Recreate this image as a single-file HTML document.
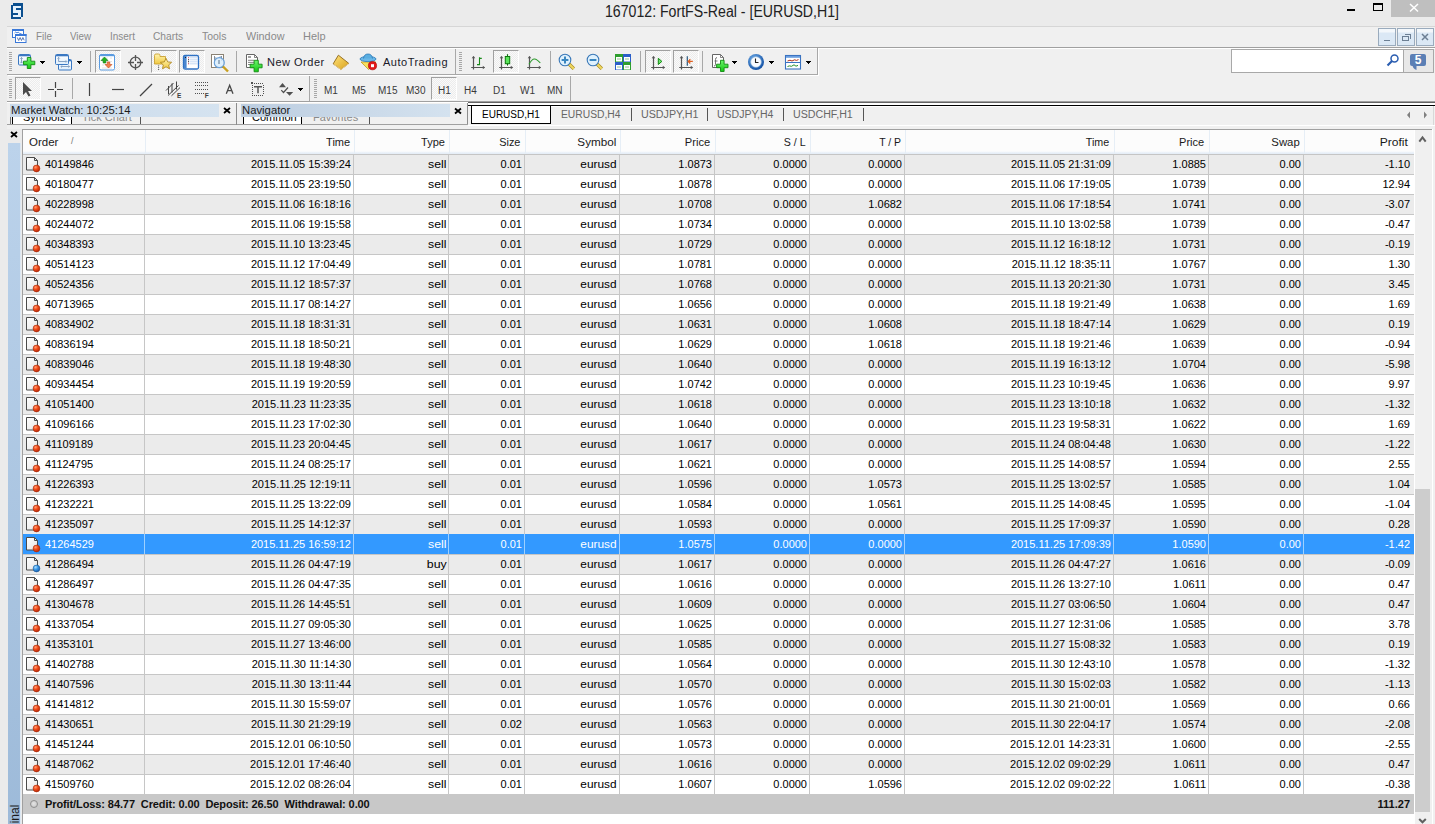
<!DOCTYPE html>
<html><head><meta charset="utf-8"><style>
*{margin:0;padding:0;box-sizing:border-box}
html,body{width:1435px;height:824px;overflow:hidden;background:#ebebeb;font-family:"Liberation Sans",sans-serif;position:relative}
.a{position:absolute}
#title{position:absolute;left:0;top:0;width:1435px;height:26px;background:#ebebeb}
#title .t{position:absolute;left:605px;top:3px;font-size:16px;color:#222;white-space:nowrap;transform:scaleX(0.883);transform-origin:0 0}
#closebtn{position:absolute;left:1391px;top:0;width:44px;height:17px;background:#bfbfbf}
#menubar{position:absolute;left:7px;top:26px;width:1428px;height:22px;background:#f0f0f0;border-top:1px solid #d6d6d6;border-bottom:1px solid #a0a0a0}
#rebar:before{content:"";position:absolute;left:0;top:0;width:1428px;height:1px;background:#fff}
.menu{position:absolute;top:29.8px;font-size:11.5px;color:#8a8a8a;transform-origin:0 0}
.mdib{position:absolute;top:28px;width:18px;height:18px;border:1px solid #9aabbd;background:linear-gradient(#f3f7fb 0,#f3f7fb 3px,#dbe8f5 4px,#dbe8f5 100%)}
#rebar{position:absolute;left:7px;top:48px;width:1428px;height:54px;background:#f0f0f0;border-bottom:1px solid #a0a0a0}
.tb{position:absolute;background:#f0f0f0}
.grip{position:absolute;width:3px;background:repeating-linear-gradient(#a8a8a8 0,#a8a8a8 1px,transparent 1px,transparent 2px)}
.sep{position:absolute;width:1px;background:#a8a8a8}
.pressed{position:absolute;border-left:1px solid #a0a0a0;border-top:1px solid #a0a0a0;border-right:1px solid #fff;border-bottom:1px solid #fff;background-color:#f7f7f7;background-image:repeating-conic-gradient(#ececec 0 25%,#fafafa 0 50%);background-size:2px 2px}
.tft{position:absolute;font-size:10px;color:#3a3a3a;top:84.5px}
.ttxt{position:absolute;font-size:11px;letter-spacing:0.5px;color:#1a1a2a;top:56px}
#panels{position:absolute;left:7px;top:102px;width:1428px;height:27px;background:#f0f0f0}
.ph{position:absolute;top:104px;height:13px;background:#cbdbeb;font-size:11.3px;line-height:13px;color:#1a1a1a;white-space:nowrap}
.xx{position:absolute;font-size:10px;font-weight:bold;color:#000}
#tbl{position:absolute;left:22px;top:129px;width:1392px;height:695px;background:#fff;border-left:1px solid #a0a0a0;border-top:1px solid #a0a0a0;overflow:hidden}
.hdr{position:absolute;left:0;top:0;width:1391px;height:25px;background:linear-gradient(#fcfcfc 0,#fcfcfc 21px,#f3f7fc 22px,#e6eef7 23px,#e6eef7 24px)}
.hdr:after{content:"";position:absolute;left:0;top:24px;width:1391px;height:1px;background:#c5c5c5}
.hc,.hr{position:absolute;top:5.6px;font-size:11.5px;transform-origin:100% 50%;color:#1a1a1a;white-space:nowrap}
.sortmark{position:absolute;top:6px;font-size:9px;color:#777}
.hsep{position:absolute;top:0;width:1px;height:24px;background:#e6eef6}
.row{position:absolute;left:0;width:1391px;height:20px;background:#fff;border-bottom:1px solid #c6c6c6}
.row.alt{background:#ebebeb}
.row.sel{background:#3399ff;color:#fff}
.row.sel span{margin-top:1px}
.row.sel .ico{top:1px}
.row span{position:absolute;top:3px;font-size:11px;color:#000;white-space:nowrap}
.row.sel span{color:#fff}
.c0{left:22px}
.vsep{position:absolute;top:25px;width:1px;height:640px;background:#c6c6c6}
.ico{position:absolute;left:0;top:0}
.sum{position:absolute;left:0;top:664px;width:1392px;height:20px;background:#c8c8c8}
.sumico{position:absolute;left:7px;top:6px;width:8px;height:8px;border-radius:50%;border:1px solid #8f8f8f;background:radial-gradient(circle at 45% 45%,#e4e4e4 0,#cfcfcf 60%,#b8b8b8 100%)}
.sumtxt{position:absolute;left:22px;top:4px;font-size:11px;font-weight:bold;color:#111;white-space:nowrap;letter-spacing:-0.1px}
.sumtot{position:absolute;right:5px;top:4px;font-size:11px;font-weight:bold;color:#111}
#scroll{position:absolute;left:1414px;top:129px;width:21px;height:695px;background:#f0f0f0;border-left:1px solid #fff;border-right:3px solid #f0f0f0}
#scroll:after{content:"";position:absolute;left:17px;top:0;width:1px;height:695px;background:#fff}
#thumb{position:absolute;left:1415px;top:489px;width:15px;height:323px;background:#cdcdcd}
#lstrip{position:absolute;left:8px;top:143px;width:13px;height:681px;background:linear-gradient(#bcd3eb,#9dbad9);border-right:1px solid #dce7f2}
#tb1{position:absolute;left:7px;top:48px;width:811px;height:27px;border-right:1px solid #a8a8a8;border-bottom:1px solid #a8a8a8;box-shadow:1px 1px 0 #fff}
#tb2{position:absolute}
#search{position:absolute;left:1231px;top:49px;width:173px;height:24px;background:#fff;border:1px solid #a8a8a8}
#comm{position:absolute;left:1403px;top:49px;width:31px;height:24px;background:#e8e8e8;border:1px solid #a8a8a8}
#ic{position:absolute;left:0;top:0}
#splitter{position:absolute;left:236px;top:102px;width:1px;height:23px;background:#8c8c8c}
#navright{position:absolute;left:467px;top:102px;width:1px;height:23px;background:#8c8c8c}
#mwtabs{position:absolute;left:9px;top:117px;width:226px;height:8px;background:#f0f0f0;border-bottom:1px solid #8c8c8c}
#navtabs{position:absolute;left:240px;top:117px;width:227px;height:8px;background:#f0f0f0;border-bottom:1px solid #8c8c8c}
#tabline{position:absolute;left:468px;top:105px;width:967px;height:1px;background:#000}
#tabbot{position:absolute;left:468px;top:125px;width:967px;height:1px;background:#fff}
.tsep{position:absolute;top:108px;width:1px;height:13px;background:#555}
.ctab{position:absolute;top:108.5px;font-size:10px;color:#666;white-space:nowrap}
.ctab.act{left:471px;top:105px;width:80px;height:19px;background:#fff;border:1px solid #000;border-top:none;color:#000;padding:3.5px 0 0 10px}
#termlbl{position:absolute;left:9px;top:760px;width:60px;transform-origin:0 0;transform:rotate(-90deg) translate(-62px,0);font-size:11px;color:#111}
#scrtop{position:absolute;left:1414px;top:129px;width:18px;height:1px;background:#a0a0a0}
.ssep{position:absolute;top:0;width:1px;height:20px;background:#9dd0ff}

</style></head><body>
<div id="title"><span class="t">167012: FortFS-Real - [EURUSD,H1]</span></div>
<div id="closebtn"></div>
<div id="menubar"></div>
<span class="menu" style="left:35.5px;transform:scaleX(0.861)">File</span>
<span class="menu" style="left:69.5px;transform:scaleX(0.854)">View</span>
<span class="menu" style="left:110px;transform:scaleX(0.868)">Insert</span>
<span class="menu" style="left:153.3px;transform:scaleX(0.888)">Charts</span>
<span class="menu" style="left:202px;transform:scaleX(0.909)">Tools</span>
<span class="menu" style="left:246px;transform:scaleX(0.94)">Window</span>
<span class="menu" style="left:303px;transform:scaleX(0.957)">Help</span>
<div class="mdib" style="left:1378px"></div>
<div class="mdib" style="left:1397px"></div>
<div class="mdib" style="left:1416px"></div>
<div id="rebar"></div>
<div id="tb1"></div>
<div id="search"></div>
<div id="comm"></div>
<div class="pressed" style="left:95px;top:50px;width:26px;height:23px"></div>
<div class="pressed" style="left:151px;top:50px;width:26px;height:23px"></div>
<div class="pressed" style="left:179px;top:50px;width:26px;height:23px"></div>
<div class="pressed" style="left:493px;top:50px;width:26px;height:23px"></div>
<div class="pressed" style="left:645px;top:50px;width:26px;height:23px"></div>
<div class="pressed" style="left:673px;top:50px;width:26px;height:23px"></div>
<div class="pressed" style="left:15px;top:77px;width:26px;height:23px"></div>
<div class="pressed" style="left:431px;top:77px;width:26px;height:23px"></div>
<span class="ttxt" style="left:267px">New Order</span>
<span class="ttxt" style="left:383px">AutoTrading</span>
<span class="tft" style="left:324px">M1</span>
<span class="tft" style="left:352px">M5</span>
<span class="tft" style="left:378px">M15</span>
<span class="tft" style="left:406px">M30</span>
<span class="tft" style="left:438px">H1</span>
<span class="tft" style="left:464px">H4</span>
<span class="tft" style="left:493px">D1</span>
<span class="tft" style="left:520px">W1</span>
<span class="tft" style="left:547px">MN</span>
<div id="panels"></div>
<div class="ph" style="left:10px;width:209px;padding-left:1px;background:linear-gradient(90deg,#c8d8e9,#d5e3f0)">Market Watch: 10:25:14</div>
<div class="ph" style="left:241px;width:209px;padding-left:1px;background:linear-gradient(90deg,#bccde0,#d4e2ef)">Navigator</div>
<div id="mwtabs"></div>
<div id="navtabs"></div>
<span class="ctab act">EURUSD,H1</span>
<span class="ctab" style="left:561px;transform:scaleX(1.03);transform-origin:0 0">EURUSD,H4</span>
<span class="ctab" style="left:641px;transform:scaleX(1.07);transform-origin:0 0">USDJPY,H1</span>
<span class="ctab" style="left:717px;transform:scaleX(1.05);transform-origin:0 0">USDJPY,H4</span>
<span class="ctab" style="left:793px;transform:scaleX(1.065);transform-origin:0 0">USDCHF,H1</span>
<i class="tsep" style="left:631px"></i><i class="tsep" style="left:707px"></i><i class="tsep" style="left:783px"></i><i class="tsep" style="left:863px"></i>
<div id="lstrip"></div>
<div id="scroll"></div>
<div id="thumb"></div>
<svg id="ic" width="1435" height="130" viewBox="0 0 1435 130" shape-rendering="crispEdges">
<!-- logo -->
<rect x="12" y="4.5" width="10" height="13" fill="#e6f2fc"/>
<g fill="#0b4f8f">
<rect x="13" y="3" width="10" height="2.5" fill="#0b4f8f"/>
<rect x="21" y="3" width="2.2" height="13.6"/>
<rect x="10.8" y="5.4" width="2.2" height="13.3"/>
<rect x="10.8" y="16.6" width="9.8" height="2.1"/>
<rect x="16" y="8.2" width="5.2" height="1.8"/>
<rect x="13" y="12.5" width="4.8" height="2"/>
</g>
<!-- window buttons -->
<rect x="1347" y="9" width="8" height="2" fill="#000"/>
<rect x="1373.5" y="3.5" width="9" height="7" fill="none" stroke="#000" stroke-width="1"/>
<rect x="1373" y="3" width="10" height="2" fill="#000"/>
<path d="M1410 4 L1418 11.5 M1418 4 L1410 11.5" stroke="#fff" stroke-width="1.5" shape-rendering="geometricPrecision"/>
<!-- mdi icon -->
<g shape-rendering="geometricPrecision">
<rect x="12.5" y="29.5" width="11" height="8" fill="#fff" stroke="#3a78d8"/>
<rect x="12" y="29" width="12" height="2" fill="#3a78d8"/>
<path d="M14.5 33l1.2-1 1.3 1 1.2-1 1.5 1.5 2 0.5" stroke="#3a78d8" stroke-width="0.9" fill="none"/>
<rect x="15.5" y="34.5" width="10.5" height="8" fill="#fff" stroke="#3a78d8"/>
<rect x="15" y="34" width="11.5" height="2" fill="#3a78d8"/>
<path d="M17.3 37.5l1.4 3 1.4-3 1.4 3 1.4-3 1.3 2.8" stroke="#4a6aa8" stroke-width="0.9" fill="none"/>
</g>
<!-- mdi button glyphs -->
<rect x="1384" y="39.5" width="6" height="1.8" fill="#6c7f94"/>
<rect x="1402.5" y="36.5" width="6" height="4" fill="none" stroke="#6c7f94"/>
<path d="M1404.5 34.5 h6 v4" fill="none" stroke="#6c7f94"/>
<path d="M1422 34 L1428 40 M1428 34 L1422 40" stroke="#6c7f94" stroke-width="1.5" shape-rendering="geometricPrecision"/>
<!-- grips -->
<g fill="#a8a8a8">
<rect x="9" y="52" width="3" height="1"/><rect x="9" y="54" width="3" height="1"/><rect x="9" y="56" width="3" height="1"/><rect x="9" y="58" width="3" height="1"/><rect x="9" y="60" width="3" height="1"/><rect x="9" y="62" width="3" height="1"/><rect x="9" y="64" width="3" height="1"/><rect x="9" y="66" width="3" height="1"/><rect x="9" y="68" width="3" height="1"/><rect x="9" y="70" width="3" height="1"/>
<rect x="9" y="79" width="3" height="1"/><rect x="9" y="81" width="3" height="1"/><rect x="9" y="83" width="3" height="1"/><rect x="9" y="85" width="3" height="1"/><rect x="9" y="87" width="3" height="1"/><rect x="9" y="89" width="3" height="1"/><rect x="9" y="91" width="3" height="1"/><rect x="9" y="93" width="3" height="1"/><rect x="9" y="95" width="3" height="1"/><rect x="9" y="97" width="3" height="1"/>
<rect x="459" y="52" width="3" height="1"/><rect x="459" y="54" width="3" height="1"/><rect x="459" y="56" width="3" height="1"/><rect x="459" y="58" width="3" height="1"/><rect x="459" y="60" width="3" height="1"/><rect x="459" y="62" width="3" height="1"/><rect x="459" y="64" width="3" height="1"/><rect x="459" y="66" width="3" height="1"/><rect x="459" y="68" width="3" height="1"/><rect x="459" y="70" width="3" height="1"/>
<rect x="314" y="79" width="3" height="1"/><rect x="314" y="81" width="3" height="1"/><rect x="314" y="83" width="3" height="1"/><rect x="314" y="85" width="3" height="1"/><rect x="314" y="87" width="3" height="1"/><rect x="314" y="89" width="3" height="1"/><rect x="314" y="91" width="3" height="1"/><rect x="314" y="93" width="3" height="1"/><rect x="314" y="95" width="3" height="1"/><rect x="314" y="97" width="3" height="1"/>
</g>
<!-- separators -->
<g fill="#a8a8a8">
<rect x="90" y="51" width="1" height="21"/>
<rect x="236" y="51" width="1" height="21"/>
<rect x="455" y="49" width="1" height="25"/>
<rect x="550" y="51" width="1" height="21"/>
<rect x="640" y="51" width="1" height="21"/>
<rect x="702" y="51" width="1" height="21"/>
<rect x="72" y="78" width="1" height="21"/>
<rect x="309" y="76" width="1" height="25"/>
<rect x="570" y="76" width="1" height="25"/>
</g>
<!-- dropdown arrows -->
<g fill="#000">
<path d="M40 61h5l-2.5 3z"/><path d="M77 61h5l-2.5 3z"/><path d="M732 61h5l-2.5 3z"/><path d="M769 61h5l-2.5 3z"/><path d="M806 61h5l-2.5 3z"/><path d="M298 88h5l-2.5 3z"/>
</g>
<g shape-rendering="geometricPrecision">
<!-- new chart -->
<defs><linearGradient id="wg" x1="0" y1="0" x2="0" y2="1"><stop offset="0" stop-color="#ffffff"/><stop offset="1" stop-color="#dfeefc"/></linearGradient>
<linearGradient id="gg" x1="0" y1="0" x2="0" y2="1"><stop offset="0" stop-color="#6cf46c"/><stop offset="1" stop-color="#14c814"/></linearGradient></defs>
<rect x="18.5" y="54.5" width="12" height="10.5" rx="1" fill="url(#wg)" stroke="#3b78c2"/>
<rect x="19" y="55" width="11" height="1.3" fill="#3b78c2"/>
<path d="M21.5 57.5v5.5 M20.3 58.7l1.2-1.2 1.2 1.2 M20.3 61.8l1.2 1.2 1.2-1.2" stroke="#7d9bbd" stroke-width="0.9" fill="none"/>
<path d="M27.3 57.5h3.6v3.7h3.9v3.5h-3.9v3.8h-3.6v-3.8h-3.8v-3.5h3.8z" fill="url(#gg)" stroke="#128a12" stroke-width="0.9"/>
<!-- profiles -->
<rect x="58.5" y="59.5" width="13" height="10.5" rx="1" fill="url(#wg)" stroke="#3b78c2"/>
<rect x="59" y="60" width="12" height="1.3" fill="#3b78c2"/>
<rect x="55.5" y="54.5" width="13" height="10" rx="1" fill="url(#wg)" stroke="#3b78c2"/>
<rect x="56" y="55" width="12" height="1.3" fill="#3b78c2"/>
<path d="M58.6 57.5v4 M58.6 61.5h8 M57.5 58.5l1.1-1.1 1.1 1.1 M65.8 60.4l1.1 1.1-1.1 1.1 M61 66.5h8.5 M62 65.4l-1.1 1.1 1.1 1.1 M68.5 65.4l1.1 1.1-1.1 1.1" stroke="#7d9bbd" stroke-width="0.9" fill="none"/>
<!-- market watch -->
<rect x="99.5" y="54.5" width="15" height="15.5" rx="1.5" fill="#fff" stroke="#5a9be0"/>
<rect x="100" y="55" width="14" height="1.2" fill="#5a9be0"/>
<path d="M102 58h2 M106 58h2 M110 58h2 M102 61.5h10 M102 65h2 M102 68h10" stroke="#d0d0d0" stroke-width="0.6"/>
<path d="M104.5 57l-3.5 3.5h2.2v2.5h2.6v-2.5h2.2z" fill="#1fb01f" stroke="#0e7a0e" stroke-width="0.6"/>
<path d="M108.5 68l3.5-3.5h-2.2v-2.5h-2.6v2.5h-2.2z" fill="#f08050" stroke="#c84a1a" stroke-width="0.6"/>
<!-- crosshair -->
<circle cx="135.5" cy="62.5" r="5.3" fill="none" stroke="#555" stroke-width="1.3"/>
<path d="M135.5 55v6 M135.5 64v6 M128 62.5h6 M137 62.5h6" stroke="#555" stroke-width="1.3"/>
<!-- folder star -->
<defs><linearGradient id="fg" x1="0" y1="0" x2="0" y2="1"><stop offset="0" stop-color="#fff4b0"/><stop offset="1" stop-color="#f0c840"/></linearGradient></defs>
<path d="M154.5 55.5q0-1.5 1.5-1.5h2.5q1.5 0 1.5 1.5v1h5.5v7.5h-11z" fill="url(#fg)" stroke="#c9a032" stroke-width="0.9"/>
<path d="M166 58.3l1.7 3.6 3.9 0.4-2.9 2.6 0.8 3.9-3.5-2-3.5 2 0.8-3.9-2.9-2.6 3.9-0.4z" fill="url(#fg)" stroke="#b08822" stroke-width="0.9"/>
<path d="M158.6 65.5v0.8 M158.6 67.3v0.8 M158.6 69.1v0.8" stroke="#333" stroke-width="1"/>
<!-- list -->
<rect x="183.5" y="55.5" width="15" height="13.5" rx="1.5" fill="#fff" stroke="#2f72c4" stroke-width="1.3"/>
<rect x="184" y="56" width="2.6" height="12.5" fill="#4a86d0"/>
<path d="M189.5 57.8h8.5 M189.5 59.8h8.5 M189.5 61.8h8.5 M189.5 63.8h8.5" stroke="#b8d0f0" stroke-width="0.8"/>
<path d="M188 57.8h1 M188 63.8h1" stroke="#d04060" stroke-width="1.1"/>
<path d="M188 59.8h1 M188 61.8h1 M185 57.5h1" stroke="#222" stroke-width="1.1"/>
<!-- zoom search -->
<rect x="211.5" y="54.5" width="12" height="13" fill="#fff" stroke="#8a8274"/>
<path d="M214.5 56v6 M221.5 56v5 M214.5 58h2 M221.5 57h-2" stroke="#6a7a8a" stroke-width="0.8"/>
<circle cx="219.3" cy="62.7" r="5" fill="#d8ecfb" fill-opacity="0.85" stroke="#6aa0d8" stroke-width="1.2"/>
<rect x="218" y="60" width="2" height="4" fill="#9ab0c4"/>
<path d="M223 66.5l5 5" stroke="#c9a020" stroke-width="2.4"/>
<!-- new order -->
<path d="M246.5 54.5h8l3 3v10h-11z" fill="#fff" stroke="#666"/>
<path d="M254.5 54.5v3h3" fill="none" stroke="#666" stroke-width="0.8"/>
<path d="M248 57h3" stroke="#888" stroke-width="1.6"/>
<path d="M248 60.3h6 M248 62.4h6 M248 64.5h4" stroke="#777" stroke-width="0.9"/>
<path d="M254.1 60.3h4.2v3.9h3.8v3.6h-3.8v4h-4.2v-4h-3.9v-3.6h3.9z" fill="url(#gg)" stroke="#128a12" stroke-width="0.9"/>
<!-- eraser -->
<defs><linearGradient id="eg" x1="0" y1="0" x2="1" y2="1"><stop offset="0" stop-color="#ffe27a"/><stop offset="1" stop-color="#d9a21c"/></linearGradient></defs>
<path d="M338.4 55.2l10.4 8.2-7.9 6.1-7.7-5.7z" fill="url(#eg)" stroke="#8c6414" stroke-width="0.9"/>
<path d="M334 64.5l7 5 7.5-5.8" fill="none" stroke="#f5d890" stroke-width="0.9"/>
<!-- autotrading -->
<path d="M361 62h15l-7.5 7.5z" fill="#f7e060" stroke="#c09a20" stroke-width="0.8"/>
<ellipse cx="368" cy="59" rx="8" ry="2.6" fill="#6ab8e8" stroke="#2a78b8" stroke-width="0.8"/>
<path d="M363.5 58.5q0.5-4.5 4.5-4.5t4.5 4.5" fill="#5aaee0" stroke="#2a78b8" stroke-width="0.8"/>
<circle cx="372.5" cy="65.7" r="4.1" fill="#e21a1a" stroke="#a00" stroke-width="0.6"/>
<rect x="371" y="64.2" width="3" height="3" fill="#fff"/>
<!-- bar chart -->
<path d="M473.5 56.5v13 M471.2 67.5h13.3" stroke="#555" stroke-width="1.2" fill="none"/><path d="M471.7 58.3l1.8-2.3 1.8 2.3z M482.8 65.7l2.3 1.8-2.3 1.8z" fill="#555"/>
<path d="M479.5 57.3v8 M479.5 58.4h2.3 M477 64.6h2.5" stroke="#1a8a1a" stroke-width="1.1" fill="none"/>
<!-- candle -->
<path d="M501.5 56.5v13 M499.2 67.5h13.3" stroke="#555" stroke-width="1.2" fill="none"/><path d="M499.7 58.3l1.8-2.3 1.8 2.3z M510.8 65.7l2.3 1.8-2.3 1.8z" fill="#555"/>
<path d="M507.5 54.2v11.4" stroke="#0e6e0e" stroke-width="1.1"/>
<rect x="505.3" y="56.5" width="4.4" height="7.2" fill="#5ae45a" stroke="#0e7a0e" stroke-width="1"/>
<!-- line chart -->
<path d="M529.5 56.5v13 M527.2 67.5h13.3" stroke="#555" stroke-width="1.2" fill="none"/><path d="M527.7 58.3l1.8-2.3 1.8 2.3z M538.8 65.7l2.3 1.8-2.3 1.8z" fill="#555"/>
<path d="M529 64.3q3-5.5 5.5-5.3t5.8 4" stroke="#2a9a2a" stroke-width="1.1" fill="none"/>
<!-- zoom in/out -->
<defs><linearGradient id="hg" x1="0" y1="0" x2="1" y2="1"><stop offset="0" stop-color="#fff0a0"/><stop offset="1" stop-color="#d8b020"/></linearGradient></defs>
<path d="M568.8 63.8l5 5" stroke="#a88a20" stroke-width="3.4"/><path d="M568.8 63.8l5 5" stroke="#f0d860" stroke-width="2"/>
<circle cx="565" cy="60" r="5.8" fill="#dff1fd" stroke="#3a78b8" stroke-width="1.1"/>
<path d="M561.6 60h6.8 M565 56.6v6.8" stroke="#3a86c0" stroke-width="2"/>
<path d="M596.8 63.8l5 5" stroke="#a88a20" stroke-width="3.4"/><path d="M596.8 63.8l5 5" stroke="#f0d860" stroke-width="2"/>
<circle cx="593" cy="60" r="5.8" fill="#dff1fd" stroke="#3a78b8" stroke-width="1.1"/>
<path d="M589.6 60h6.8" stroke="#3a86c0" stroke-width="2"/>
<!-- tile -->
<rect x="615" y="54" width="8" height="8" fill="#2e9e2e"/><rect x="623" y="54" width="8" height="8" fill="#2a5ec8"/>
<rect x="615" y="62" width="8" height="8" fill="#2a5ec8"/><rect x="623" y="62" width="8" height="8" fill="#2e9e2e"/>
<path d="M616 57h6v4.5h-6z M624 57h6v4.5h-6z M616 65h6v4.5h-6z M624 65h6v4.5h-6z" fill="#fff"/><path d="M617 59h4 M625 59h4 M617 67h4 M625 67h4" stroke="#7ab07a" stroke-width="0.8"/>
<!-- autoscroll -->
<path d="M653.5 56.5v13 M651.2 67.5h13.3" stroke="#555" stroke-width="1.2" fill="none"/><path d="M651.7 58.3l1.8-2.3 1.8 2.3z M662.8 65.7l2.3 1.8-2.3 1.8z" fill="#555"/>
<path d="M658.3 58.3v6.2l3.6-3.1z" fill="#6ee46e" stroke="#108a10" stroke-width="1"/>
<!-- shift -->
<path d="M681.5 56.5v13 M679.2 67.5h13.3" stroke="#555" stroke-width="1.2" fill="none"/><path d="M679.7 58.3l1.8-2.3 1.8 2.3z M690.8 65.7l2.3 1.8-2.3 1.8z" fill="#555"/>
<path d="M687.3 56.2v9.5" stroke="#2a5a80" stroke-width="1.2"/>
<path d="M688.2 61.4h4.6 M690.3 59.3l-2.1 2.1 2.1 2.1" stroke="#e06020" stroke-width="1.3" fill="none"/>
<!-- indicators -->
<path d="M712.5 54.5h8l3 3v10h-11z" fill="#fff" stroke="#666"/>
<path d="M720.5 54.5v3h3" fill="none" stroke="#666" stroke-width="0.8"/>
<path d="M717 57.5q-1.5 0-1.5 2v5q0 1.5-1.5 1.5 M714.5 61h3" stroke="#666" stroke-width="0.9" fill="none"/>
<path d="M720.5 60.3h3.6v3.9h3.9v3.5h-3.9v3.8h-3.6v-3.8h-3.9v-3.5h3.9z" fill="url(#gg)" stroke="#128a12" stroke-width="0.9"/>
<!-- clock -->
<defs><radialGradient id="cg" cx="0.4" cy="0.35" r="0.7"><stop offset="0" stop-color="#7ab8f0"/><stop offset="1" stop-color="#0c4aa0"/></radialGradient></defs>
<circle cx="756" cy="62" r="8" fill="url(#cg)"/>
<circle cx="756" cy="62" r="5.3" fill="#f8fbff" stroke="#9ab8d8" stroke-width="0.6"/>
<path d="M755.5 58.5v4h3" stroke="#222" stroke-width="1.1" fill="none"/>
<!-- templates -->
<rect x="785.5" y="55.5" width="15" height="13.5" fill="#fff" stroke="#3a72c0" stroke-width="1.1"/>
<rect x="786" y="56" width="14" height="1.8" fill="#6a9ee0"/>
<path d="M786 62.5h14" stroke="#3a72c0" stroke-width="1"/>
<path d="M787.5 61l2.5-0.8 2 0.8 2.5-1.2 2 0.6 2-0.8" stroke="#b03018" stroke-width="1" fill="none"/>
<path d="M787.5 66.5l2-0.6 2 0.4 2.5-1.5 2 1.4 2-0.8" stroke="#28902a" stroke-width="1" fill="none"/>
<!-- search -->
<circle cx="1394.5" cy="58.5" r="3.5" fill="none" stroke="#2a5db0" stroke-width="1.5"/>
<path d="M1392 61l-4.5 4.5" stroke="#2a5db0" stroke-width="2.2"/>
<!-- community -->
<rect x="1410" y="54" width="16" height="12" rx="2" fill="#5b7fb5"/>
<path d="M1412.5 65.5q0.5 3 4 4.5v-4.5z" fill="#5b7fb5"/>
<text x="1418.2" y="64.3" font-family="Liberation Sans" font-size="12" font-weight="bold" fill="#fff" text-anchor="middle">5</text>
<!-- toolbar2 -->
<path d="M23 82v13l3-3 2.5 4.5 2-1-2.5-4.5h4z" fill="#4a4a4a"/>
<path d="M55.5 82v6 M55.5 91v6 M48 89.5h6 M57 89.5h6" stroke="#444" stroke-width="1.2"/>
<path d="M89.5 83v13" stroke="#444" stroke-width="1.2"/>
<path d="M112 89.5h12" stroke="#444" stroke-width="1.2"/>
<path d="M140 96l12-12" stroke="#444" stroke-width="1.2"/>
<path d="M166 90.5l7.5-7.5 M168 95.5l10.5-10 M171.5 95.8l8.5-8.2 M168.5 86v8 M172 83.5v9 M176.5 81.5v8" stroke="#444" stroke-width="1" fill="none"/>
<text x="177" y="97.8" font-family="Liberation Sans" font-size="6.5" font-weight="bold" fill="#404040">E</text>
<g fill="#505050" shape-rendering="crispEdges"><rect x="195" y="82" width="1.2" height="1.2"/><rect x="197" y="82" width="1.2" height="1.2"/><rect x="199" y="82" width="1.2" height="1.2"/><rect x="201" y="82" width="1.2" height="1.2"/><rect x="203" y="82" width="1.2" height="1.2"/><rect x="205" y="82" width="1.2" height="1.2"/><rect x="207" y="82" width="1.2" height="1.2"/><rect x="195" y="85" width="1.2" height="1.2"/><rect x="197" y="85" width="1.2" height="1.2"/><rect x="199" y="85" width="1.2" height="1.2"/><rect x="201" y="85" width="1.2" height="1.2"/><rect x="203" y="85" width="1.2" height="1.2"/><rect x="205" y="85" width="1.2" height="1.2"/><rect x="207" y="85" width="1.2" height="1.2"/><rect x="195" y="89" width="1.2" height="1.2"/><rect x="197" y="89" width="1.2" height="1.2"/><rect x="199" y="89" width="1.2" height="1.2"/><rect x="201" y="89" width="1.2" height="1.2"/><rect x="203" y="89" width="1.2" height="1.2"/><rect x="205" y="89" width="1.2" height="1.2"/><rect x="207" y="89" width="1.2" height="1.2"/><rect x="195" y="93" width="1.2" height="1.2"/><rect x="197" y="93" width="1.2" height="1.2"/><rect x="199" y="93" width="1.2" height="1.2"/><rect x="201" y="93" width="1.2" height="1.2"/><rect x="203" y="93" width="1.2" height="1.2"/></g>
<text x="204.8" y="97.8" font-family="Liberation Sans" font-size="6.5" font-weight="bold" fill="#404040">F</text>
<path d="M226.3 93.8l3.35-8.6 3.35 8.6 M227.6 90.6h4.1" stroke="#484848" stroke-width="1.3" fill="none"/>
<g fill="#505050" shape-rendering="crispEdges"><rect x="252" y="83" width="1" height="1"/><rect x="252" y="95" width="1" height="1"/><rect x="254" y="83" width="1" height="1"/><rect x="254" y="95" width="1" height="1"/><rect x="256" y="83" width="1" height="1"/><rect x="256" y="95" width="1" height="1"/><rect x="258" y="83" width="1" height="1"/><rect x="258" y="95" width="1" height="1"/><rect x="260" y="83" width="1" height="1"/><rect x="260" y="95" width="1" height="1"/><rect x="262" y="83" width="1" height="1"/><rect x="262" y="95" width="1" height="1"/><rect x="252" y="85" width="1" height="1"/><rect x="263" y="85" width="1" height="1"/><rect x="252" y="87" width="1" height="1"/><rect x="263" y="87" width="1" height="1"/><rect x="252" y="89" width="1" height="1"/><rect x="263" y="89" width="1" height="1"/><rect x="252" y="91" width="1" height="1"/><rect x="263" y="91" width="1" height="1"/><rect x="252" y="93" width="1" height="1"/><rect x="263" y="93" width="1" height="1"/></g>
<path d="M251 82h2v2h-2z" fill="#505050"/>
<path d="M254 86.8h8 M258 86.8v6.5" stroke="#555" stroke-width="1.5"/>
<path d="M279 87.2l3.5-4.2 3.5 4.2z M286 92l3.6 3.8 3.6-3.8z" fill="#505050"/>
<path d="M281.3 90.2l2.2 2.3 4.5-5" stroke="#505050" stroke-width="1.2" fill="none"/>
</g>
</svg>
<svg class="a" style="left:0;top:100px" width="470" height="40"><path d="M224 8l6 5 M230 8l-6 5 M455 8.5l6 5 M461 8.5l-6 5 M11 32l6 5 M17 32l-6 5" stroke="#000" stroke-width="1.8"/></svg>
<div id="splitter"></div>
<div id="navright"></div>
<div id="tabline"></div>
<div id="tabbot"></div>
<svg class="a" style="left:1400px;top:108px" width="35" height="14"><path d="M7 7l3-3.5v7z M24 3.5v7l3-3.5z" fill="#808080"/></svg>
<svg class="a" style="left:1414px;top:130px" width="18" height="694"><path d="M5.3 11.6l3.2-4.2 3.2 4.2" stroke="#606060" stroke-width="2" fill="none"/><path d="M5.2 689l3.3 3.3 3.3-3.3" stroke="#606060" stroke-width="2" fill="none"/></svg>
<div class="a" style="left:9px;top:117px;width:226px;height:7px;overflow:hidden">
 <div class="a" style="left:3px;top:0;width:60px;height:7px;background:#fff;border-left:1px solid #000;border-right:1px solid #000"></div>
 <span class="a" style="left:14px;top:-6px;font-size:11px;color:#000">Symbols</span>
 <span class="a" style="left:73px;top:-6px;font-size:11px;color:#8a8a8a">Tick Chart</span>
 <div class="a" style="left:1px;top:0;width:1px;height:7px;background:#777"></div>
 <div class="a" style="left:131px;top:0;width:1px;height:7px;background:#555"></div>
</div>
<div class="a" style="left:240px;top:117px;width:227px;height:7px;overflow:hidden">
 <div class="a" style="left:3px;top:0;width:59px;height:7px;background:#fff;border-left:1px solid #000;border-right:1px solid #000"></div>
 <span class="a" style="left:12px;top:-6px;font-size:11px;color:#000">Common</span>
 <span class="a" style="left:73px;top:-6px;font-size:11px;color:#8a8a8a">Favorites</span>
 <div class="a" style="left:129px;top:0;width:1px;height:7px;background:#555"></div>
</div>
<svg class="a" style="left:0;top:700px" width="22" height="124"><text transform="translate(19 150) rotate(-90)" font-family="Liberation Sans" font-size="12" fill="#1a1a1a">Terminal</text></svg>
<div id="scrtop"></div>
<div class="a" style="left:7px;top:124px;width:461px;height:1px;background:#a0a0a0"></div><div class="a" style="left:236px;top:102px;width:1px;height:23px;background:#8c8c8c"></div>
<div class="a" style="left:7px;top:102px;width:461px;height:1px;background:#fff"></div><div class="a" style="left:468px;top:102px;width:967px;height:1px;background:#646464"></div><div class="a" style="left:468px;top:103px;width:967px;height:2px;background:#fff"></div><div class="a" style="left:468px;top:106px;width:967px;height:1px;background:#fff"></div><div class="a" style="left:1433px;top:106px;width:1px;height:19px;background:#d8d8d8"></div>
<div class="a" style="left:471px;top:105px;width:1px;height:19px;background:#000"></div><div class="a" style="left:550px;top:105px;width:1px;height:19px;background:#000"></div>

<svg width="0" height="0" style="position:absolute"><defs>
<linearGradient id="pg" x1="0" y1="0" x2="1" y2="1"><stop offset="0" stop-color="#ffffff"/><stop offset="1" stop-color="#e4e4e4"/></linearGradient>
<radialGradient id="rg" cx="0.35" cy="0.3" r="0.7"><stop offset="0" stop-color="#ff9a70"/><stop offset="0.5" stop-color="#f04a18"/><stop offset="1" stop-color="#b82a08"/></radialGradient>
<radialGradient id="bg" cx="0.35" cy="0.3" r="0.7"><stop offset="0" stop-color="#a8dcff"/><stop offset="0.5" stop-color="#3a9ae8"/><stop offset="1" stop-color="#1a5fb0"/></radialGradient>
<symbol id="sellico" viewBox="0 0 18 18"><path d="M3.5 2.5h8l3 3v9.5h-11z" fill="url(#pg)" stroke="#4a4a4a"/><path d="M11.5 2.5v3h3" fill="none" stroke="#4a4a4a"/><circle cx="13.5" cy="13.5" r="3.4" fill="url(#rg)" stroke="#a82a0a" stroke-width="0.6"/></symbol>
<symbol id="buyico" viewBox="0 0 18 18"><path d="M3.5 2.5h8l3 3v9.5h-11z" fill="url(#pg)" stroke="#4a4a4a"/><path d="M11.5 2.5v3h3" fill="none" stroke="#4a4a4a"/><circle cx="13.5" cy="13.5" r="3.4" fill="url(#bg)" stroke="#1a5a9a" stroke-width="0.6"/></symbol>
</defs></svg><div id="tbl"><div class="hdr"><span class="hc" style="left:6px">Order</span><span class="sortmark" style="left:48px">/</span><span class="hr" style="right:1064.2px;transform:scaleX(0.958)">Time</span><span class="hr" style="right:969.2px;transform:scaleX(0.958)">Type</span><span class="hr" style="right:893.4px;transform:scaleX(0.945)">Size</span><span class="hr" style="right:798.1px;transform:scaleX(1.017)">Symbol</span><span class="hr" style="right:703.5px;transform:scaleX(0.967)">Price</span><span class="hr" style="right:608px;transform:scaleX(0.923)">S / L</span><span class="hr" style="right:512.9px;transform:scaleX(0.909)">T / P</span><span class="hr" style="right:304.4px;transform:scaleX(0.929)">Time</span><span class="hr" style="right:209.5px;transform:scaleX(0.958)">Price</span><span class="hr" style="right:114.7px;transform:scaleX(0.989)">Swap</span><span class="hr" style="right:6.3px;transform:scaleX(1.05)">Profit</span><i class="hsep" style="left:122px"></i><i class="hsep" style="left:331px"></i><i class="hsep" style="left:426px"></i><i class="hsep" style="left:502px"></i><i class="hsep" style="left:597px"></i><i class="hsep" style="left:692px"></i><i class="hsep" style="left:787px"></i><i class="hsep" style="left:882px"></i><i class="hsep" style="left:1091px"></i><i class="hsep" style="left:1186px"></i><i class="hsep" style="left:1281px"></i></div><div class="row alt" style="top:25px"><svg class="ico" width="18" height="18"><use href="#sellico"/></svg><span class="c0">40149846</span><span class="cr" style="right:1063px">2015.11.05 15:39:24</span><span class="cr" style="right:967.5px;transform:scaleX(1.12);transform-origin:100% 50%">sell</span><span class="cr" style="right:892px">0.01</span><span class="cr" style="right:797px;transform:scaleX(1.08);transform-origin:100% 50%">eurusd</span><span class="cr" style="right:702px">1.0873</span><span class="cr" style="right:607px">0.0000</span><span class="cr" style="right:512px">0.0000</span><span class="cr" style="right:303px">2015.11.05 21:31:09</span><span class="cr" style="right:208px">1.0885</span><span class="cr" style="right:113px">0.00</span><span class="cr" style="right:4px">-1.10</span></div><div class="row" style="top:45px"><svg class="ico" width="18" height="18"><use href="#sellico"/></svg><span class="c0">40180477</span><span class="cr" style="right:1063px">2015.11.05 23:19:50</span><span class="cr" style="right:967.5px;transform:scaleX(1.12);transform-origin:100% 50%">sell</span><span class="cr" style="right:892px">0.01</span><span class="cr" style="right:797px;transform:scaleX(1.08);transform-origin:100% 50%">eurusd</span><span class="cr" style="right:702px">1.0878</span><span class="cr" style="right:607px">0.0000</span><span class="cr" style="right:512px">0.0000</span><span class="cr" style="right:303px">2015.11.06 17:19:05</span><span class="cr" style="right:208px">1.0739</span><span class="cr" style="right:113px">0.00</span><span class="cr" style="right:4px">12.94</span></div><div class="row alt" style="top:65px"><svg class="ico" width="18" height="18"><use href="#sellico"/></svg><span class="c0">40228998</span><span class="cr" style="right:1063px">2015.11.06 16:18:16</span><span class="cr" style="right:967.5px;transform:scaleX(1.12);transform-origin:100% 50%">sell</span><span class="cr" style="right:892px">0.01</span><span class="cr" style="right:797px;transform:scaleX(1.08);transform-origin:100% 50%">eurusd</span><span class="cr" style="right:702px">1.0708</span><span class="cr" style="right:607px">0.0000</span><span class="cr" style="right:512px">1.0682</span><span class="cr" style="right:303px">2015.11.06 17:18:54</span><span class="cr" style="right:208px">1.0741</span><span class="cr" style="right:113px">0.00</span><span class="cr" style="right:4px">-3.07</span></div><div class="row" style="top:85px"><svg class="ico" width="18" height="18"><use href="#sellico"/></svg><span class="c0">40244072</span><span class="cr" style="right:1063px">2015.11.06 19:15:58</span><span class="cr" style="right:967.5px;transform:scaleX(1.12);transform-origin:100% 50%">sell</span><span class="cr" style="right:892px">0.01</span><span class="cr" style="right:797px;transform:scaleX(1.08);transform-origin:100% 50%">eurusd</span><span class="cr" style="right:702px">1.0734</span><span class="cr" style="right:607px">0.0000</span><span class="cr" style="right:512px">0.0000</span><span class="cr" style="right:303px">2015.11.10 13:02:58</span><span class="cr" style="right:208px">1.0739</span><span class="cr" style="right:113px">0.00</span><span class="cr" style="right:4px">-0.47</span></div><div class="row alt" style="top:105px"><svg class="ico" width="18" height="18"><use href="#sellico"/></svg><span class="c0">40348393</span><span class="cr" style="right:1063px">2015.11.10 13:23:45</span><span class="cr" style="right:967.5px;transform:scaleX(1.12);transform-origin:100% 50%">sell</span><span class="cr" style="right:892px">0.01</span><span class="cr" style="right:797px;transform:scaleX(1.08);transform-origin:100% 50%">eurusd</span><span class="cr" style="right:702px">1.0729</span><span class="cr" style="right:607px">0.0000</span><span class="cr" style="right:512px">0.0000</span><span class="cr" style="right:303px">2015.11.12 16:18:12</span><span class="cr" style="right:208px">1.0731</span><span class="cr" style="right:113px">0.00</span><span class="cr" style="right:4px">-0.19</span></div><div class="row" style="top:125px"><svg class="ico" width="18" height="18"><use href="#sellico"/></svg><span class="c0">40514123</span><span class="cr" style="right:1063px">2015.11.12 17:04:49</span><span class="cr" style="right:967.5px;transform:scaleX(1.12);transform-origin:100% 50%">sell</span><span class="cr" style="right:892px">0.01</span><span class="cr" style="right:797px;transform:scaleX(1.08);transform-origin:100% 50%">eurusd</span><span class="cr" style="right:702px">1.0781</span><span class="cr" style="right:607px">0.0000</span><span class="cr" style="right:512px">0.0000</span><span class="cr" style="right:303px">2015.11.12 18:35:11</span><span class="cr" style="right:208px">1.0767</span><span class="cr" style="right:113px">0.00</span><span class="cr" style="right:4px">1.30</span></div><div class="row alt" style="top:145px"><svg class="ico" width="18" height="18"><use href="#sellico"/></svg><span class="c0">40524356</span><span class="cr" style="right:1063px">2015.11.12 18:57:37</span><span class="cr" style="right:967.5px;transform:scaleX(1.12);transform-origin:100% 50%">sell</span><span class="cr" style="right:892px">0.01</span><span class="cr" style="right:797px;transform:scaleX(1.08);transform-origin:100% 50%">eurusd</span><span class="cr" style="right:702px">1.0768</span><span class="cr" style="right:607px">0.0000</span><span class="cr" style="right:512px">0.0000</span><span class="cr" style="right:303px">2015.11.13 20:21:30</span><span class="cr" style="right:208px">1.0731</span><span class="cr" style="right:113px">0.00</span><span class="cr" style="right:4px">3.45</span></div><div class="row" style="top:165px"><svg class="ico" width="18" height="18"><use href="#sellico"/></svg><span class="c0">40713965</span><span class="cr" style="right:1063px">2015.11.17 08:14:27</span><span class="cr" style="right:967.5px;transform:scaleX(1.12);transform-origin:100% 50%">sell</span><span class="cr" style="right:892px">0.01</span><span class="cr" style="right:797px;transform:scaleX(1.08);transform-origin:100% 50%">eurusd</span><span class="cr" style="right:702px">1.0656</span><span class="cr" style="right:607px">0.0000</span><span class="cr" style="right:512px">0.0000</span><span class="cr" style="right:303px">2015.11.18 19:21:49</span><span class="cr" style="right:208px">1.0638</span><span class="cr" style="right:113px">0.00</span><span class="cr" style="right:4px">1.69</span></div><div class="row alt" style="top:185px"><svg class="ico" width="18" height="18"><use href="#sellico"/></svg><span class="c0">40834902</span><span class="cr" style="right:1063px">2015.11.18 18:31:31</span><span class="cr" style="right:967.5px;transform:scaleX(1.12);transform-origin:100% 50%">sell</span><span class="cr" style="right:892px">0.01</span><span class="cr" style="right:797px;transform:scaleX(1.08);transform-origin:100% 50%">eurusd</span><span class="cr" style="right:702px">1.0631</span><span class="cr" style="right:607px">0.0000</span><span class="cr" style="right:512px">1.0608</span><span class="cr" style="right:303px">2015.11.18 18:47:14</span><span class="cr" style="right:208px">1.0629</span><span class="cr" style="right:113px">0.00</span><span class="cr" style="right:4px">0.19</span></div><div class="row" style="top:205px"><svg class="ico" width="18" height="18"><use href="#sellico"/></svg><span class="c0">40836194</span><span class="cr" style="right:1063px">2015.11.18 18:50:21</span><span class="cr" style="right:967.5px;transform:scaleX(1.12);transform-origin:100% 50%">sell</span><span class="cr" style="right:892px">0.01</span><span class="cr" style="right:797px;transform:scaleX(1.08);transform-origin:100% 50%">eurusd</span><span class="cr" style="right:702px">1.0629</span><span class="cr" style="right:607px">0.0000</span><span class="cr" style="right:512px">1.0618</span><span class="cr" style="right:303px">2015.11.18 19:21:46</span><span class="cr" style="right:208px">1.0639</span><span class="cr" style="right:113px">0.00</span><span class="cr" style="right:4px">-0.94</span></div><div class="row alt" style="top:225px"><svg class="ico" width="18" height="18"><use href="#sellico"/></svg><span class="c0">40839046</span><span class="cr" style="right:1063px">2015.11.18 19:48:30</span><span class="cr" style="right:967.5px;transform:scaleX(1.12);transform-origin:100% 50%">sell</span><span class="cr" style="right:892px">0.01</span><span class="cr" style="right:797px;transform:scaleX(1.08);transform-origin:100% 50%">eurusd</span><span class="cr" style="right:702px">1.0640</span><span class="cr" style="right:607px">0.0000</span><span class="cr" style="right:512px">0.0000</span><span class="cr" style="right:303px">2015.11.19 16:13:12</span><span class="cr" style="right:208px">1.0704</span><span class="cr" style="right:113px">0.00</span><span class="cr" style="right:4px">-5.98</span></div><div class="row" style="top:245px"><svg class="ico" width="18" height="18"><use href="#sellico"/></svg><span class="c0">40934454</span><span class="cr" style="right:1063px">2015.11.19 19:20:59</span><span class="cr" style="right:967.5px;transform:scaleX(1.12);transform-origin:100% 50%">sell</span><span class="cr" style="right:892px">0.01</span><span class="cr" style="right:797px;transform:scaleX(1.08);transform-origin:100% 50%">eurusd</span><span class="cr" style="right:702px">1.0742</span><span class="cr" style="right:607px">0.0000</span><span class="cr" style="right:512px">0.0000</span><span class="cr" style="right:303px">2015.11.23 10:19:45</span><span class="cr" style="right:208px">1.0636</span><span class="cr" style="right:113px">0.00</span><span class="cr" style="right:4px">9.97</span></div><div class="row alt" style="top:265px"><svg class="ico" width="18" height="18"><use href="#sellico"/></svg><span class="c0">41051400</span><span class="cr" style="right:1063px">2015.11.23 11:23:35</span><span class="cr" style="right:967.5px;transform:scaleX(1.12);transform-origin:100% 50%">sell</span><span class="cr" style="right:892px">0.01</span><span class="cr" style="right:797px;transform:scaleX(1.08);transform-origin:100% 50%">eurusd</span><span class="cr" style="right:702px">1.0618</span><span class="cr" style="right:607px">0.0000</span><span class="cr" style="right:512px">0.0000</span><span class="cr" style="right:303px">2015.11.23 13:10:18</span><span class="cr" style="right:208px">1.0632</span><span class="cr" style="right:113px">0.00</span><span class="cr" style="right:4px">-1.32</span></div><div class="row" style="top:285px"><svg class="ico" width="18" height="18"><use href="#sellico"/></svg><span class="c0">41096166</span><span class="cr" style="right:1063px">2015.11.23 17:02:30</span><span class="cr" style="right:967.5px;transform:scaleX(1.12);transform-origin:100% 50%">sell</span><span class="cr" style="right:892px">0.01</span><span class="cr" style="right:797px;transform:scaleX(1.08);transform-origin:100% 50%">eurusd</span><span class="cr" style="right:702px">1.0640</span><span class="cr" style="right:607px">0.0000</span><span class="cr" style="right:512px">0.0000</span><span class="cr" style="right:303px">2015.11.23 19:58:31</span><span class="cr" style="right:208px">1.0622</span><span class="cr" style="right:113px">0.00</span><span class="cr" style="right:4px">1.69</span></div><div class="row alt" style="top:305px"><svg class="ico" width="18" height="18"><use href="#sellico"/></svg><span class="c0">41109189</span><span class="cr" style="right:1063px">2015.11.23 20:04:45</span><span class="cr" style="right:967.5px;transform:scaleX(1.12);transform-origin:100% 50%">sell</span><span class="cr" style="right:892px">0.01</span><span class="cr" style="right:797px;transform:scaleX(1.08);transform-origin:100% 50%">eurusd</span><span class="cr" style="right:702px">1.0617</span><span class="cr" style="right:607px">0.0000</span><span class="cr" style="right:512px">0.0000</span><span class="cr" style="right:303px">2015.11.24 08:04:48</span><span class="cr" style="right:208px">1.0630</span><span class="cr" style="right:113px">0.00</span><span class="cr" style="right:4px">-1.22</span></div><div class="row" style="top:325px"><svg class="ico" width="18" height="18"><use href="#sellico"/></svg><span class="c0">41124795</span><span class="cr" style="right:1063px">2015.11.24 08:25:17</span><span class="cr" style="right:967.5px;transform:scaleX(1.12);transform-origin:100% 50%">sell</span><span class="cr" style="right:892px">0.01</span><span class="cr" style="right:797px;transform:scaleX(1.08);transform-origin:100% 50%">eurusd</span><span class="cr" style="right:702px">1.0621</span><span class="cr" style="right:607px">0.0000</span><span class="cr" style="right:512px">0.0000</span><span class="cr" style="right:303px">2015.11.25 14:08:57</span><span class="cr" style="right:208px">1.0594</span><span class="cr" style="right:113px">0.00</span><span class="cr" style="right:4px">2.55</span></div><div class="row alt" style="top:345px"><svg class="ico" width="18" height="18"><use href="#sellico"/></svg><span class="c0">41226393</span><span class="cr" style="right:1063px">2015.11.25 12:19:11</span><span class="cr" style="right:967.5px;transform:scaleX(1.12);transform-origin:100% 50%">sell</span><span class="cr" style="right:892px">0.01</span><span class="cr" style="right:797px;transform:scaleX(1.08);transform-origin:100% 50%">eurusd</span><span class="cr" style="right:702px">1.0596</span><span class="cr" style="right:607px">0.0000</span><span class="cr" style="right:512px">1.0573</span><span class="cr" style="right:303px">2015.11.25 13:02:57</span><span class="cr" style="right:208px">1.0585</span><span class="cr" style="right:113px">0.00</span><span class="cr" style="right:4px">1.04</span></div><div class="row" style="top:365px"><svg class="ico" width="18" height="18"><use href="#sellico"/></svg><span class="c0">41232221</span><span class="cr" style="right:1063px">2015.11.25 13:22:09</span><span class="cr" style="right:967.5px;transform:scaleX(1.12);transform-origin:100% 50%">sell</span><span class="cr" style="right:892px">0.01</span><span class="cr" style="right:797px;transform:scaleX(1.08);transform-origin:100% 50%">eurusd</span><span class="cr" style="right:702px">1.0584</span><span class="cr" style="right:607px">0.0000</span><span class="cr" style="right:512px">1.0561</span><span class="cr" style="right:303px">2015.11.25 14:08:45</span><span class="cr" style="right:208px">1.0595</span><span class="cr" style="right:113px">0.00</span><span class="cr" style="right:4px">-1.04</span></div><div class="row alt" style="top:385px"><svg class="ico" width="18" height="18"><use href="#sellico"/></svg><span class="c0">41235097</span><span class="cr" style="right:1063px">2015.11.25 14:12:37</span><span class="cr" style="right:967.5px;transform:scaleX(1.12);transform-origin:100% 50%">sell</span><span class="cr" style="right:892px">0.01</span><span class="cr" style="right:797px;transform:scaleX(1.08);transform-origin:100% 50%">eurusd</span><span class="cr" style="right:702px">1.0593</span><span class="cr" style="right:607px">0.0000</span><span class="cr" style="right:512px">0.0000</span><span class="cr" style="right:303px">2015.11.25 17:09:37</span><span class="cr" style="right:208px">1.0590</span><span class="cr" style="right:113px">0.00</span><span class="cr" style="right:4px">0.28</span></div><div class="row alt" style="top:425px"><svg class="ico" width="18" height="18"><use href="#buyico"/></svg><span class="c0">41286494</span><span class="cr" style="right:1063px">2015.11.26 04:47:19</span><span class="cr" style="right:967.5px;transform:scaleX(1.12);transform-origin:100% 50%">buy</span><span class="cr" style="right:892px">0.01</span><span class="cr" style="right:797px;transform:scaleX(1.08);transform-origin:100% 50%">eurusd</span><span class="cr" style="right:702px">1.0617</span><span class="cr" style="right:607px">0.0000</span><span class="cr" style="right:512px">0.0000</span><span class="cr" style="right:303px">2015.11.26 04:47:27</span><span class="cr" style="right:208px">1.0616</span><span class="cr" style="right:113px">0.00</span><span class="cr" style="right:4px">-0.09</span></div><div class="row" style="top:445px"><svg class="ico" width="18" height="18"><use href="#sellico"/></svg><span class="c0">41286497</span><span class="cr" style="right:1063px">2015.11.26 04:47:35</span><span class="cr" style="right:967.5px;transform:scaleX(1.12);transform-origin:100% 50%">sell</span><span class="cr" style="right:892px">0.01</span><span class="cr" style="right:797px;transform:scaleX(1.08);transform-origin:100% 50%">eurusd</span><span class="cr" style="right:702px">1.0616</span><span class="cr" style="right:607px">0.0000</span><span class="cr" style="right:512px">0.0000</span><span class="cr" style="right:303px">2015.11.26 13:27:10</span><span class="cr" style="right:208px">1.0611</span><span class="cr" style="right:113px">0.00</span><span class="cr" style="right:4px">0.47</span></div><div class="row alt" style="top:465px"><svg class="ico" width="18" height="18"><use href="#sellico"/></svg><span class="c0">41304678</span><span class="cr" style="right:1063px">2015.11.26 14:45:51</span><span class="cr" style="right:967.5px;transform:scaleX(1.12);transform-origin:100% 50%">sell</span><span class="cr" style="right:892px">0.01</span><span class="cr" style="right:797px;transform:scaleX(1.08);transform-origin:100% 50%">eurusd</span><span class="cr" style="right:702px">1.0609</span><span class="cr" style="right:607px">0.0000</span><span class="cr" style="right:512px">0.0000</span><span class="cr" style="right:303px">2015.11.27 03:06:50</span><span class="cr" style="right:208px">1.0604</span><span class="cr" style="right:113px">0.00</span><span class="cr" style="right:4px">0.47</span></div><div class="row" style="top:485px"><svg class="ico" width="18" height="18"><use href="#sellico"/></svg><span class="c0">41337054</span><span class="cr" style="right:1063px">2015.11.27 09:05:30</span><span class="cr" style="right:967.5px;transform:scaleX(1.12);transform-origin:100% 50%">sell</span><span class="cr" style="right:892px">0.01</span><span class="cr" style="right:797px;transform:scaleX(1.08);transform-origin:100% 50%">eurusd</span><span class="cr" style="right:702px">1.0625</span><span class="cr" style="right:607px">0.0000</span><span class="cr" style="right:512px">0.0000</span><span class="cr" style="right:303px">2015.11.27 12:31:06</span><span class="cr" style="right:208px">1.0585</span><span class="cr" style="right:113px">0.00</span><span class="cr" style="right:4px">3.78</span></div><div class="row alt" style="top:505px"><svg class="ico" width="18" height="18"><use href="#sellico"/></svg><span class="c0">41353101</span><span class="cr" style="right:1063px">2015.11.27 13:46:00</span><span class="cr" style="right:967.5px;transform:scaleX(1.12);transform-origin:100% 50%">sell</span><span class="cr" style="right:892px">0.01</span><span class="cr" style="right:797px;transform:scaleX(1.08);transform-origin:100% 50%">eurusd</span><span class="cr" style="right:702px">1.0585</span><span class="cr" style="right:607px">0.0000</span><span class="cr" style="right:512px">0.0000</span><span class="cr" style="right:303px">2015.11.27 15:08:32</span><span class="cr" style="right:208px">1.0583</span><span class="cr" style="right:113px">0.00</span><span class="cr" style="right:4px">0.19</span></div><div class="row" style="top:525px"><svg class="ico" width="18" height="18"><use href="#sellico"/></svg><span class="c0">41402788</span><span class="cr" style="right:1063px">2015.11.30 11:14:30</span><span class="cr" style="right:967.5px;transform:scaleX(1.12);transform-origin:100% 50%">sell</span><span class="cr" style="right:892px">0.01</span><span class="cr" style="right:797px;transform:scaleX(1.08);transform-origin:100% 50%">eurusd</span><span class="cr" style="right:702px">1.0564</span><span class="cr" style="right:607px">0.0000</span><span class="cr" style="right:512px">0.0000</span><span class="cr" style="right:303px">2015.11.30 12:43:10</span><span class="cr" style="right:208px">1.0578</span><span class="cr" style="right:113px">0.00</span><span class="cr" style="right:4px">-1.32</span></div><div class="row alt" style="top:545px"><svg class="ico" width="18" height="18"><use href="#sellico"/></svg><span class="c0">41407596</span><span class="cr" style="right:1063px">2015.11.30 13:11:44</span><span class="cr" style="right:967.5px;transform:scaleX(1.12);transform-origin:100% 50%">sell</span><span class="cr" style="right:892px">0.01</span><span class="cr" style="right:797px;transform:scaleX(1.08);transform-origin:100% 50%">eurusd</span><span class="cr" style="right:702px">1.0570</span><span class="cr" style="right:607px">0.0000</span><span class="cr" style="right:512px">0.0000</span><span class="cr" style="right:303px">2015.11.30 15:02:03</span><span class="cr" style="right:208px">1.0582</span><span class="cr" style="right:113px">0.00</span><span class="cr" style="right:4px">-1.13</span></div><div class="row" style="top:565px"><svg class="ico" width="18" height="18"><use href="#sellico"/></svg><span class="c0">41414812</span><span class="cr" style="right:1063px">2015.11.30 15:59:07</span><span class="cr" style="right:967.5px;transform:scaleX(1.12);transform-origin:100% 50%">sell</span><span class="cr" style="right:892px">0.01</span><span class="cr" style="right:797px;transform:scaleX(1.08);transform-origin:100% 50%">eurusd</span><span class="cr" style="right:702px">1.0576</span><span class="cr" style="right:607px">0.0000</span><span class="cr" style="right:512px">0.0000</span><span class="cr" style="right:303px">2015.11.30 21:00:01</span><span class="cr" style="right:208px">1.0569</span><span class="cr" style="right:113px">0.00</span><span class="cr" style="right:4px">0.66</span></div><div class="row alt" style="top:585px"><svg class="ico" width="18" height="18"><use href="#sellico"/></svg><span class="c0">41430651</span><span class="cr" style="right:1063px">2015.11.30 21:29:19</span><span class="cr" style="right:967.5px;transform:scaleX(1.12);transform-origin:100% 50%">sell</span><span class="cr" style="right:892px">0.02</span><span class="cr" style="right:797px;transform:scaleX(1.08);transform-origin:100% 50%">eurusd</span><span class="cr" style="right:702px">1.0563</span><span class="cr" style="right:607px">0.0000</span><span class="cr" style="right:512px">0.0000</span><span class="cr" style="right:303px">2015.11.30 22:04:17</span><span class="cr" style="right:208px">1.0574</span><span class="cr" style="right:113px">0.00</span><span class="cr" style="right:4px">-2.08</span></div><div class="row" style="top:605px"><svg class="ico" width="18" height="18"><use href="#sellico"/></svg><span class="c0">41451244</span><span class="cr" style="right:1063px">2015.12.01 06:10:50</span><span class="cr" style="right:967.5px;transform:scaleX(1.12);transform-origin:100% 50%">sell</span><span class="cr" style="right:892px">0.01</span><span class="cr" style="right:797px;transform:scaleX(1.08);transform-origin:100% 50%">eurusd</span><span class="cr" style="right:702px">1.0573</span><span class="cr" style="right:607px">0.0000</span><span class="cr" style="right:512px">0.0000</span><span class="cr" style="right:303px">2015.12.01 14:23:31</span><span class="cr" style="right:208px">1.0600</span><span class="cr" style="right:113px">0.00</span><span class="cr" style="right:4px">-2.55</span></div><div class="row alt" style="top:625px"><svg class="ico" width="18" height="18"><use href="#sellico"/></svg><span class="c0">41487062</span><span class="cr" style="right:1063px">2015.12.01 17:46:40</span><span class="cr" style="right:967.5px;transform:scaleX(1.12);transform-origin:100% 50%">sell</span><span class="cr" style="right:892px">0.01</span><span class="cr" style="right:797px;transform:scaleX(1.08);transform-origin:100% 50%">eurusd</span><span class="cr" style="right:702px">1.0616</span><span class="cr" style="right:607px">0.0000</span><span class="cr" style="right:512px">0.0000</span><span class="cr" style="right:303px">2015.12.02 09:02:29</span><span class="cr" style="right:208px">1.0611</span><span class="cr" style="right:113px">0.00</span><span class="cr" style="right:4px">0.47</span></div><div class="row" style="top:645px"><svg class="ico" width="18" height="18"><use href="#sellico"/></svg><span class="c0">41509760</span><span class="cr" style="right:1063px">2015.12.02 08:26:04</span><span class="cr" style="right:967.5px;transform:scaleX(1.12);transform-origin:100% 50%">sell</span><span class="cr" style="right:892px">0.01</span><span class="cr" style="right:797px;transform:scaleX(1.08);transform-origin:100% 50%">eurusd</span><span class="cr" style="right:702px">1.0607</span><span class="cr" style="right:607px">0.0000</span><span class="cr" style="right:512px">1.0596</span><span class="cr" style="right:303px">2015.12.02 09:02:22</span><span class="cr" style="right:208px">1.0611</span><span class="cr" style="right:113px">0.00</span><span class="cr" style="right:4px">-0.38</span></div><i class="vsep" style="left:121px"></i><i class="vsep" style="left:330px"></i><i class="vsep" style="left:425px"></i><i class="vsep" style="left:501px"></i><i class="vsep" style="left:596px"></i><i class="vsep" style="left:691px"></i><i class="vsep" style="left:786px"></i><i class="vsep" style="left:881px"></i><i class="vsep" style="left:1090px"></i><i class="vsep" style="left:1185px"></i><i class="vsep" style="left:1280px"></i><div class="row sel" style="top:404px;height:21px"><i class="ssep" style="left:121px"></i><i class="ssep" style="left:330px"></i><i class="ssep" style="left:425px"></i><i class="ssep" style="left:501px"></i><i class="ssep" style="left:596px"></i><i class="ssep" style="left:691px"></i><i class="ssep" style="left:786px"></i><i class="ssep" style="left:881px"></i><i class="ssep" style="left:1090px"></i><i class="ssep" style="left:1185px"></i><i class="ssep" style="left:1280px"></i><svg class="ico" width="18" height="18"><use href="#sellico"/></svg><span class="c0">41264529</span><span class="cr" style="right:1063px">2015.11.25 16:59:12</span><span class="cr" style="right:967.5px;transform:scaleX(1.12);transform-origin:100% 50%">sell</span><span class="cr" style="right:892px">0.01</span><span class="cr" style="right:797px;transform:scaleX(1.08);transform-origin:100% 50%">eurusd</span><span class="cr" style="right:702px">1.0575</span><span class="cr" style="right:607px">0.0000</span><span class="cr" style="right:512px">0.0000</span><span class="cr" style="right:303px">2015.11.25 17:09:39</span><span class="cr" style="right:208px">1.0590</span><span class="cr" style="right:113px">0.00</span><span class="cr" style="right:4px">-1.42</span></div><div class="sum"><i class="sumico"></i><span class="sumtxt">Profit/Loss: 84.77&nbsp; Credit: 0.00&nbsp; Deposit: 26.50&nbsp; Withdrawal: 0.00</span><span class="sumtot">111.27</span></div></div>
</body></html>
